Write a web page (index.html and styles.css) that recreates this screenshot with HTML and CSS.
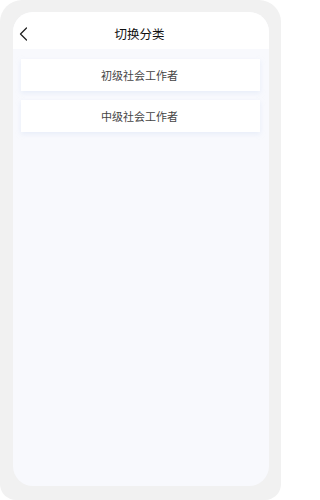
FILE: index.html
```html
<!DOCTYPE html>
<html lang="zh">
<head>
<meta charset="utf-8">
<link rel="stylesheet" href="styles.css">
</head>
<body>
<div class="frame">
  <div class="screen">
    <header class="header">
      <svg class="back" width="9" height="14" viewBox="0 0 9 14"><path d="M7.5 1 L1.5 7 L7.5 13" fill="none" stroke="#222" stroke-width="1.3" stroke-linecap="round" stroke-linejoin="round"/></svg>
      <div class="title">切换分类</div>
    </header>
    <main class="list">
      <div class="card">初级社会工作者</div>
      <div class="card">中级社会工作者</div>
    </main>
  </div>
</div>
</body>
</html>
```
FILE: styles.css
```css
html, body {
  margin: 0;
  padding: 0;
  background: #ffffff;
}
body {
  width: 281px;
  height: 500px;
  font-family: "Noto Sans CJK SC", "Noto Sans", sans-serif;
}
.frame {
  box-sizing: border-box;
  width: 281px;
  height: 500px;
  background: #f1f1f1;
  border-radius: 22px 22px 16px 16px;
  padding: 12px 12px 14px 13px;
  display: flex;
}
.screen {
  flex: 1;
  background: #f8f9fd;
  border-radius: 20px;
  overflow: hidden;
  display: flex;
  flex-direction: column;
}
.header {
  height: 37px;
  background: #ffffff;
  position: relative;
  display: flex;
  align-items: center;
  justify-content: center;
}
.back {
  position: absolute;
  left: 6px;
  top: 15px;
}
.title {
  font-size: 12.5px;
  font-weight: 400;
  color: #111;
  margin-top: 5px;
  margin-right: 3px;
}
.list {
  display: flex;
  flex-direction: column;
  gap: 9px;
  padding: 10px 9px 0 8px;
}
.card {
  height: 32px;
  background: #ffffff;
  box-shadow: 0 2px 5px rgba(200, 215, 240, 0.35);
  display: flex;
  align-items: center;
  justify-content: center;
  font-size: 11px;
  color: #444;
  padding-right: 2px;
}
```
